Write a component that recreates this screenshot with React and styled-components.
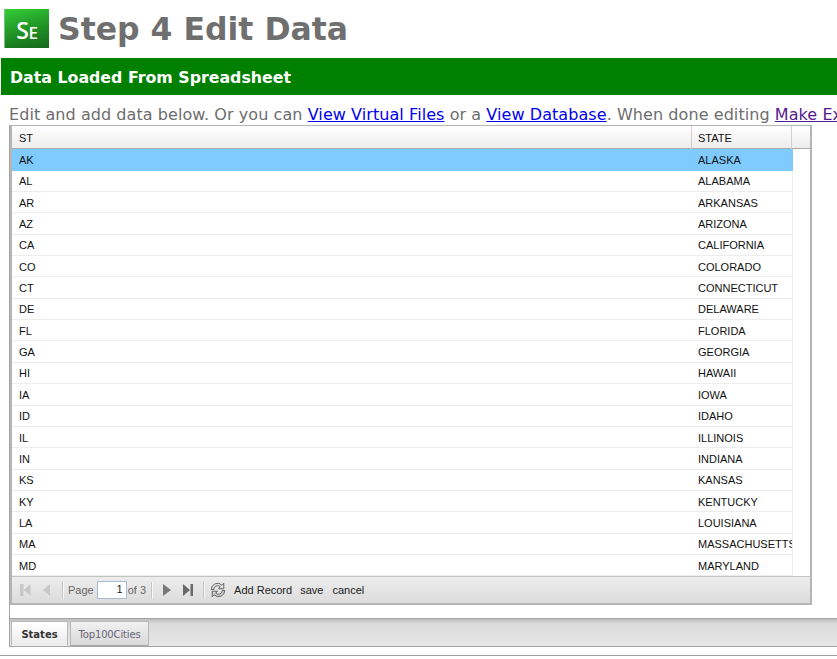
import React from "react";
import styled, { createGlobalStyle } from "styled-components";

const Global = createGlobalStyle`
  html, body { margin: 0; padding: 0; background: #fff; overflow: hidden; }
  body { font-family: "DejaVu Sans", Verdana, sans-serif; }
`;
const Page = styled.div`width: 837px; height: 659px; overflow: hidden; display: flex; flex-direction: column;`;
const Header = styled.header`display: flex; align-items: center; gap: 9px; height: 39px; padding: 9px 0 10px 4px;`;
const Logo = styled.div`
  width: 45px; height: 39px; box-sizing: border-box; display: flex; align-items: baseline; justify-content: center;
  background: linear-gradient(165deg, #35cf39 0%, #25a029 40%, #14661b 100%);
  border-left: 1px solid #7fbf82;
  color: #fff; font: 600 23px/42px "Open Sans", sans-serif; letter-spacing: -0.3px;
  small { font-size: 17px; }
`;
const Title = styled.h1`margin: 0; color: #6f6f6f; font: 700 31.5px/42px "DejaVu Sans", sans-serif; white-space: nowrap;`;
const Banner = styled.h2`
  margin: 0 0 0 1px; height: 37px; background: #008000; color: #fff; padding-left: 9px;
  font: 700 15.8px/39px "DejaVu Sans", sans-serif; white-space: nowrap;
`;
const Intro = styled.p`
  margin: 0; padding: 10px 0 0 9px; height: 20px; color: #6d6d6d; white-space: nowrap; letter-spacing: 0.07px;
  font: 400 16px/20px "DejaVu Sans", sans-serif; width: 900px;
  a { color: #0000ee; text-decoration: underline; }
  a.visited { color: #551a8b; }
`;
const Panel = styled.div`margin-left: 9px; border-left: 1px solid #a5a5a5; display: flex; flex-direction: column; flex: none; width: 828px;`;
const Grid = styled.div`
  width: 802px; height: 480px; box-sizing: border-box; flex: none;
  border: 2px solid #b5b5b5; border-top-width: 1px; background: #fff; display: flex; flex-direction: column;
`;
const HeadRow = styled.div`
  display: grid; grid-template-columns: 680px 100px 1fr; height: 23px; flex: none; box-sizing: border-box;
  background: linear-gradient(#fff, #ededed); border-bottom: 1px solid #a9a9a9;
`;
const HeadCell = styled.div`
  font: 11px/24px "Liberation Sans", Arial, sans-serif; color: #111; padding-left: 6px;
  border-right: 1px solid #d0d0d0;
  &:first-child { padding-left: 7px; }
  &:last-child { border-right: 0; }
`;
const Body = styled.div`height: 428px; flex: none;`;
const Row = styled.div`
  display: grid; grid-template-columns: 680px 100px; width: 781px; box-sizing: border-box;
  height: ${p => (p.$selected ? "21.6px" : "21.37px")};
  background: ${p => (p.$selected ? "#7fcbff" : "#fff")};
  border-bottom: 1px solid ${p => (p.$selected ? "#7fcbff" : "#ededed")};
  border-right: 1px solid ${p => (p.$selected ? "#7fcbff" : "#ededed")};
`;
const Cell = styled.div`
  font: 11px/20px "Liberation Sans", Arial, sans-serif; color: #111; padding: 0.6px 0 0 6px; overflow: hidden; white-space: nowrap;
  &:first-child { padding-left: 7px; }
`;
const Pager = styled.div`
  height: 27px; flex: none; box-sizing: border-box; display: flex; align-items: center; padding-left: 7px; margin-top: -1px;
  border-top: 1px solid #c2c2c2; background: linear-gradient(#ededed, #dcdcdc);
  font: 11px "Liberation Sans", Arial, sans-serif; color: #222;
`;
const PagerIcon = styled.svg`width: ${p => p.$size || 14}px; height: ${p => p.$size || 14}px; flex: none; margin-right: ${p => p.$mr || 0}px;`;
const Sep = styled.span`width: 1px; height: 17px; background: #c6c6c6; border-right: 1px solid #f6f6f6; margin-right: ${p => p.$mr}px; flex: none;`;
const PageLabel = styled.span`color: #666; margin: 0 ${p => p.$mr}px 0 ${p => p.$ml || 0}px;`;
const PageInput = styled.span`
  width: 30px; height: 18px; box-sizing: border-box; border: 1px solid #a9b9cf; background: #fff; color: #222; font-size: 11px;
  text-align: right; padding-right: 3px; line-height: 14px; flex: none;
`;
const Action = styled.span`color: #222; margin-right: ${p => p.$mr}px;`;
const Tabs = styled.div`
  margin-top: 13px; height: 29px; flex: none; box-sizing: border-box; border-top: 1px solid #a5a5a5;
  border-bottom: 1px solid #a5a5a5; background: linear-gradient(#bdbdbd 0, #dcdcdc 5px, #e6e6e6 100%);
  display: flex; gap: 2px; padding: 2px 0 0 1px;
`;
const Tab = styled.div`
  height: 25px; box-sizing: border-box; border: 1px solid #b8b8b8; border-bottom-color: ${p => (p.$active ? "#f2f2f2" : "#aaa")};
  background: ${p => (p.$active ? "linear-gradient(#fff,#ececec)" : "linear-gradient(#f1f1f1,#d9d9d9)")};
  font: ${p => (p.$active ? 700 : 400)} 10px/25px "DejaVu Sans", sans-serif; color: ${p => (p.$active ? "#333" : "#667")};
  letter-spacing: ${p => (p.$active ? 0 : "-0.15px")};
  width: ${p => p.$w}px; text-align: center;
`;
const Rule = styled.div`height: 1px; background: #a0a0a0; margin-top: 8px; flex: none;`;

const rows = [["AK","ALASKA"],["AL","ALABAMA"],["AR","ARKANSAS"],["AZ","ARIZONA"],["CA","CALIFORNIA"],["CO","COLORADO"],["CT","CONNECTICUT"],["DE","DELAWARE"],["FL","FLORIDA"],["GA","GEORGIA"],["HI","HAWAII"],["IA","IOWA"],["ID","IDAHO"],["IL","ILLINOIS"],["IN","INDIANA"],["KS","KANSAS"],["KY","KENTUCKY"],["LA","LOUISIANA"],["MA","MASSACHUSETTS"],["MD","MARYLAND"]];

const Nav = ({ d, fill, mr }) => (
  <PagerIcon viewBox="0 0 14 14" $mr={mr}><path d={d} fill={fill} /></PagerIcon>
);

export default function App() {
  return (
    <Page>
      <Global />
      <Header>
        <Logo>S<small>E</small></Logo>
        <Title>Step 4 Edit Data</Title>
      </Header>
      <Banner>Data Loaded From Spreadsheet</Banner>
      <Intro>
        Edit and add data below. Or you can <a href="#a">View Virtual Files</a> or a <a href="#b">View Database</a>. When done editing <a className="visited" href="#c">Make Excel</a>
      </Intro>
      <Panel>
        <Grid>
          <HeadRow>
            <HeadCell>ST</HeadCell>
            <HeadCell>STATE</HeadCell>
            <HeadCell />
          </HeadRow>
          <Body>
            {rows.map(([a, b], i) => (
              <Row key={a} $selected={i === 0}>
                <Cell>{a}</Cell>
                <Cell>{b}</Cell>
              </Row>
            ))}
          </Body>
          <Pager>
            <Nav d="M1 1h3.5v12H1zM11.5 1v12L5 7z" fill="#c8c8c8" mr={8} />
            <Nav d="M9 1v12L2 7z" fill="#c8c8c8" mr={7} />
            <Sep $mr={4} />
            <PageLabel $mr={3}>Page</PageLabel>
            <PageInput>1</PageInput>
            <PageLabel $ml={1} $mr={5}>of 3</PageLabel>
            <Sep $mr={8} />
            <Nav d="M2 1v12l8-6z" fill="#7a7a7a" mr={7} />
            <Nav d="M1 1v12l7-6zM8.5 1H11v12H8.5z" fill="#6a6a6a" mr={7} />
            <Sep $mr={5} />
            <PagerIcon viewBox="0 0 16 16" $size={16} $mr={8}>
              <path d="M1.2 7.5A6.3 6.3 0 0 1 12 3.2L13.8 1.2V6.8H8.5l1.8-2A3.8 3.8 0 0 0 3.8 7.5z" fill="#e4e4e4" stroke="#666" strokeWidth="1" strokeLinejoin="round" />
              <path d="M14.8 8.5A6.3 6.3 0 0 1 4 12.8L2.2 14.8V9.2h5.3l-1.8 2A3.8 3.8 0 0 0 12.2 8.5z" fill="#cfcfcf" stroke="#666" strokeWidth="1" strokeLinejoin="round" />
            </PagerIcon>
            <Action $mr={8}>Add Record</Action>
            <Action $mr={9}>save</Action>
            <Action $mr={0}>cancel</Action>
          </Pager>
        </Grid>
        <Tabs>
          <Tab $active $w={57}>States</Tab>
          <Tab $w={79}>Top100Cities</Tab>
        </Tabs>
      </Panel>
      <Rule />
    </Page>
  );
}
